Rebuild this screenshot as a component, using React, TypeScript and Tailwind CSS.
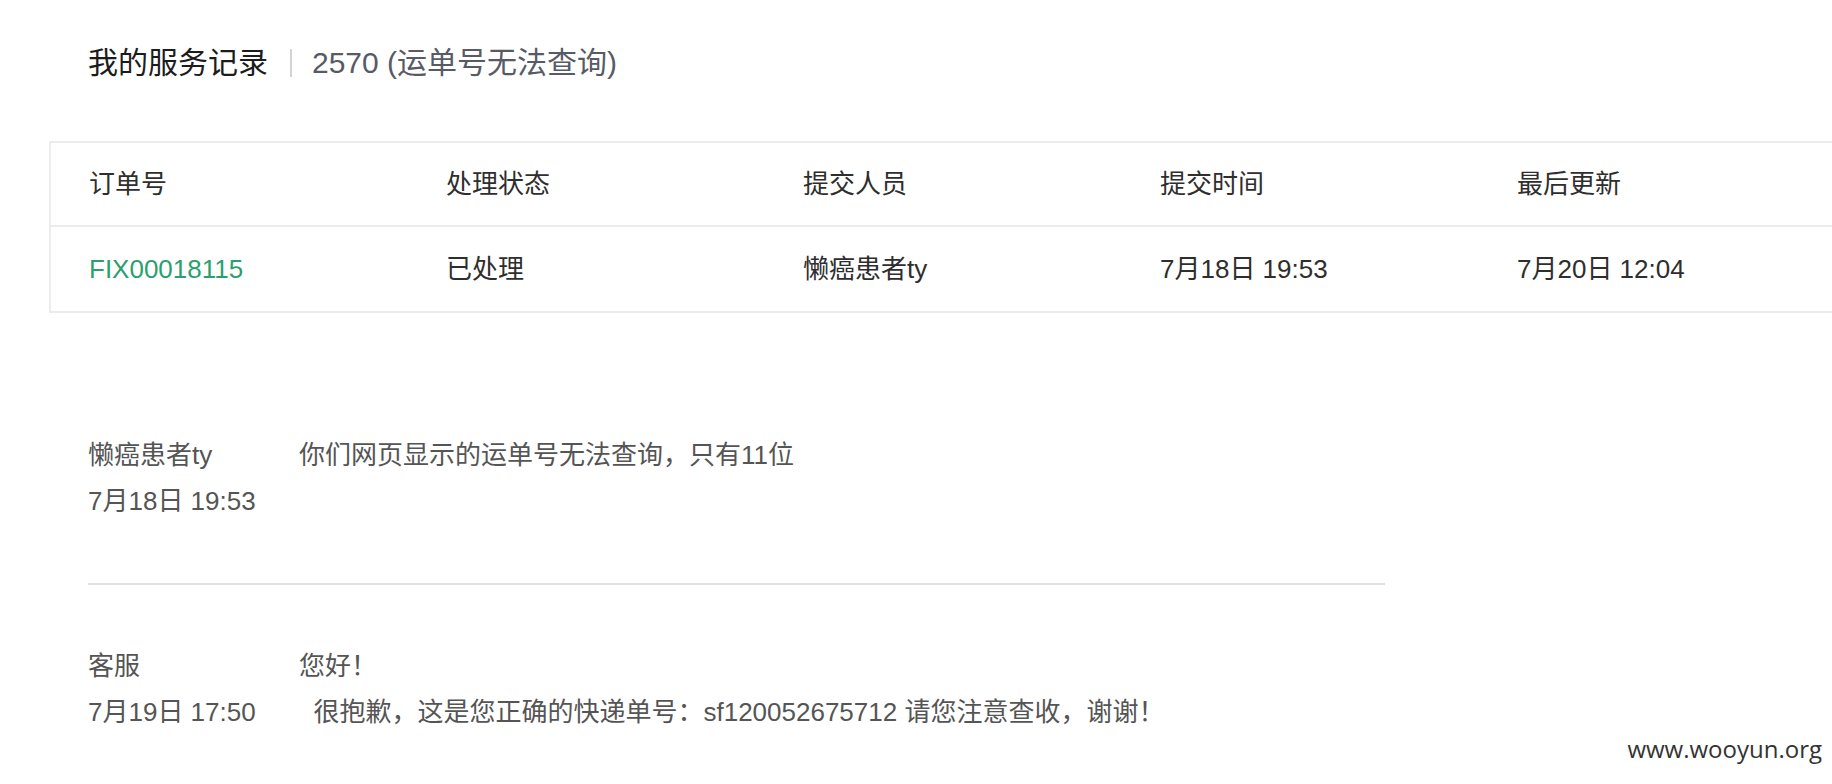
import React from "react";

const font = { fontFamily: '"Liberation Sans", "Noto Sans CJK SC", sans-serif' };

const cols = ["订单号", "处理状态", "提交人员", "提交时间", "最后更新"];

export default function App() {
  return (
    <div
      className="relative w-full h-[784px] overflow-hidden bg-white font-['Liberation_Sans','Noto_Sans_CJK_SC',sans-serif]"
      style={font}
    >
      <div className="pt-[43px] pl-[88px] flex items-center h-[83px] leading-[40px] text-[30px]">
        <span className="text-[#1c1c1c]">我的服务记录</span>
        <span className="ml-[22px] mr-[20px] w-[2px] h-[28px] bg-[#d4d4d4]" />
        <span className="text-[#575b66]">2570 (运单号无法查询)</span>
      </div>

      <div className="mt-[58px] ml-[49px] border-t-2 border-b-2 border-l-2 border-[#ececec] text-[26px] text-[#2e2e2e]">
        <div className="flex items-center h-[82px] pl-[38px]">
          {cols.map((c) => (
            <div key={c} className="w-[357px] shrink-0">
              {c}
            </div>
          ))}
        </div>
        <div className="flex items-center h-[86px] pl-[38px] border-t-2 border-[#ececec]">
          <div className="w-[357px] shrink-0 text-[#2c9f6f]">FIX00018115</div>
          <div className="w-[357px] shrink-0">已处理</div>
          <div className="w-[357px] shrink-0">懒癌患者ty</div>
          <div className="w-[357px] shrink-0">7月18日 19:53</div>
          <div className="w-[358px] shrink-0">7月20日 12:04</div>
        </div>
      </div>

      <div className="pl-[88px] text-[26px] leading-[46px] text-[#555]">
        <div className="mt-[119px] flex">
          <div className="w-[211px] shrink-0">
            <div>懒癌患者ty</div>
            <div>7月18日 19:53</div>
          </div>
          <div>你们网页显示的运单号无法查询，只有11位</div>
        </div>
        <div className="mt-[59px] w-[1297px] h-[2px] bg-[#e2e2e2]" />
        <div className="mt-[58px] flex">
          <div className="w-[211px] shrink-0">
            <div>客服</div>
            <div>7月19日 17:50</div>
          </div>
          <div>
            <div>您好！</div>
            <div>{"\u00a0\u00a0"}很抱歉，这是您正确的快递单号：sf120052675712 请您注意查收，谢谢！</div>
          </div>
        </div>
      </div>

      <div className="absolute right-[10px] top-[731px] text-[24px] leading-[36px] text-[#333] font-['Open_Sans',sans-serif]">
        www.wooyun.org
      </div>
    </div>
  );
}
